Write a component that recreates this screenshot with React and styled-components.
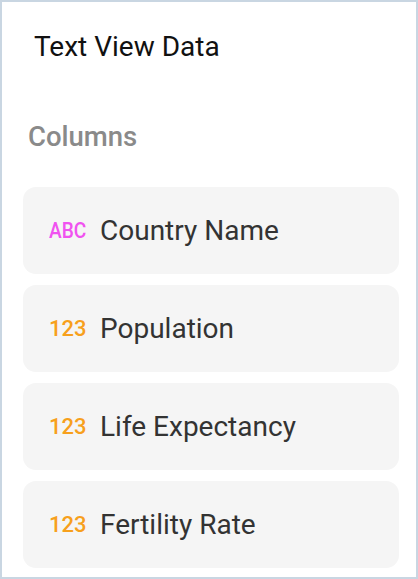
import React from "react";
import styled, { createGlobalStyle } from "styled-components";

const GlobalStyle = createGlobalStyle`
  html, body {
    margin: 0;
    padding: 0;
    background: #ffffff;
  }
  body {
    font-family: Roboto, "Noto Sans", sans-serif;
  }
`;

const Screen = styled.div`
  box-sizing: border-box;
  width: 418px;
  height: 579px;
  border: 2px solid #c9d6e2;
  background: #ffffff;
  padding: 29px 17px 0 21px;
  display: flex;
  flex-direction: column;
  overflow: hidden;
`;

const Title = styled.h1`
  margin: 0 0 0 11px;
  font-size: 28px;
  font-weight: 400;
  color: #111111;
  line-height: 32px;
`;

const SectionLabel = styled.h2`
  margin: 58px 0 34px 5px;
  font-size: 27.5px;
  font-weight: 500;
  color: #8a8a8a;
  line-height: 32px;
`;

const ColumnList = styled.div`
  display: flex;
  flex-direction: column;
  gap: 11px;
`;

const ColumnRow = styled.div`
  height: 87px;
  border-radius: 13px;
  background: #f5f5f5;
  display: flex;
  align-items: center;
  padding-left: 26px;
  gap: 14px;
`;

const TypeTag = styled.span`
  display: inline-block;
  width: 37px;
  min-width: 0;
  flex-shrink: 0;
  white-space: nowrap;
  font-size: 22px;
  font-weight: 500;
  color: ${(p) => (p.kind === "text" ? "#f052f0" : "#f7a01c")};
  transform: scaleX(${(p) => (p.kind === "text" ? 0.87 : 1)});
  transform-origin: left center;
`;

const ColumnName = styled.span`
  font-size: 28px;
  color: #333333;
`;

const columns = [
  { kind: "text", name: "Country Name" },
  { kind: "number", name: "Population" },
  { kind: "number", name: "Life Expectancy" },
  { kind: "number", name: "Fertility Rate" },
];

export default function App() {
  return (
    <>
      <GlobalStyle />
      <Screen>
        <Title>Text View Data</Title>
        <SectionLabel>Columns</SectionLabel>
        <ColumnList>
          {columns.map((c) => (
            <ColumnRow key={c.name}>
              <TypeTag kind={c.kind}>{c.kind === "text" ? "ABC" : "123"}</TypeTag>
              <ColumnName>{c.name}</ColumnName>
            </ColumnRow>
          ))}
        </ColumnList>
      </Screen>
    </>
  );
}
